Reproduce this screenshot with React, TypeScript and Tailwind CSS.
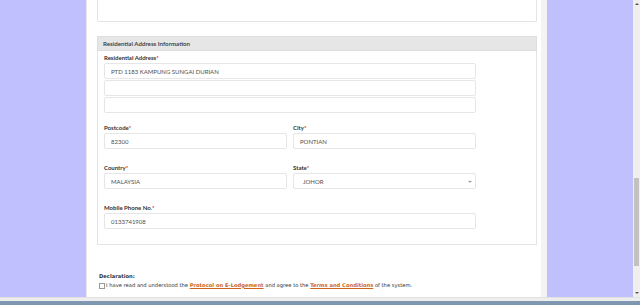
import React from 'react';

const lato = { fontFamily: 'Lato, "Open Sans", sans-serif' };

// small label with red asterisk
const Label: React.FC<{ text: string }> = ({ text }) => (
  <div className="h-[10px] leading-[10px] text-[6px] font-bold text-[#333]" style={lato}>
    {text}
    <span className="text-[#d9232e]">*</span>
  </div>
);

const Field: React.FC<{ value?: string; select?: boolean }> = ({ value = '', select }) => (
  <div
    className={`h-[16px] flex items-center justify-between border border-[#e6e6e6] rounded-[2px] bg-white text-[6px] text-[#505050] ${select ? 'pl-[9px] pr-[3px]' : 'px-[6px]'}`}
    style={lato}
  >
    <span>{value}</span>
    {select && (
      <svg width="4" height="3" viewBox="0 0 10 8">
        <path d="M1 2 L5 6 L9 2" fill="none" stroke="#555" strokeWidth="2.2" />
      </svg>
    )}
  </div>
);

export default function App() {
  return (
    <div className="w-[640px] h-[305px] flex flex-col overflow-hidden bg-white">
      <div className="flex h-[297px]">
        <div className="w-[86px] bg-[#c0c0ff]" />

        {/* centre column */}
        <div className="w-[461px] bg-white border-l border-[#e6e6e6] border-r-[6px] border-r-[#f3f3f3] pl-[10px] pr-[4px] flex flex-col">
          <div className="h-[22px] border border-t-0 border-[#e4e4e4] rounded-b-[2px]" />

          <div className="mt-[14px] h-[15px] bg-[#e6e6e6] border border-[#dedede] px-[5px] text-[6.2px] font-semibold leading-[13px] text-[#333]" style={lato}>
            Residential Address Information
          </div>
          <div className="border-x border-b border-[#e4e4e4] px-[6px] pt-[2px] pb-[15px]">
            <div className="w-[372px]">
              <Label text="Residential Address" />
              <div className="flex flex-col gap-[1px]">
                <Field value="PTD 1183 KAMPUNG SUNGAI DURIAN" />
                <Field />
                <Field />
              </div>

              <div className="mt-[10px] grid grid-cols-2 gap-x-[6px]">
                <div>
                  <Label text="Postcode" />
                  <Field value="82300" />
                </div>
                <div>
                  <Label text="City" />
                  <Field value="PONTIAN" />
                </div>
              </div>

              <div className="mt-[14px] grid grid-cols-2 gap-x-[6px]">
                <div>
                  <Label text="Country" />
                  <Field value="MALAYSIA" />
                </div>
                <div>
                  <Label text="State" />
                  <Field value="JOHOR" select />
                </div>
              </div>

              <div className="mt-[14px]">
                <Label text="Mobile Phone No." />
                <Field value="0133741908" />
              </div>
            </div>
          </div>

          <div className="mt-[26px] pl-[2px] text-[5.2px] text-[#333]" style={{ fontFamily: '"DejaVu Sans", Verdana, sans-serif' }}>
            <div className="h-[10px] leading-[10px] font-bold">Declaration:</div>
            <div className="h-[9px] flex items-center">
              <span className="inline-block w-[6px] h-[6px] border border-[#999] bg-white mr-[1px]" />
              <span>
                I have read and understood the{' '}
                <span className="font-bold underline text-[#cf641c]">Protocol on E-Lodgement</span> and agree to the{' '}
                <span className="font-bold underline text-[#cf641c]">Terms and Conditions</span> of the system.
              </span>
            </div>
          </div>
        </div>

        <div className="w-[86px] bg-[#c0c0ff]" />

        {/* browser scrollbar */}
        <div className="w-[7px] bg-[#efefef] flex flex-col items-center">
          <div className="h-[8px] flex items-center">
            <div className="w-0 h-0 border-x-[2px] border-x-transparent border-b-[2px] border-b-[#555]" />
          </div>
          <div className="mt-[170px] w-[5px] h-[88px] bg-[#c2c2c2]" />
          <div className="flex-1" />
          <div className="h-[8px] flex items-center">
            <div className="w-0 h-0 border-x-[2px] border-x-transparent border-t-[2px] border-t-[#555]" />
          </div>
        </div>
      </div>
      <div className="h-[4px] bg-[#eeeeee] border-t border-[#e2e2e2]" />
      <div className="h-[4px] bg-[#8097b2]" />
    </div>
  );
}
